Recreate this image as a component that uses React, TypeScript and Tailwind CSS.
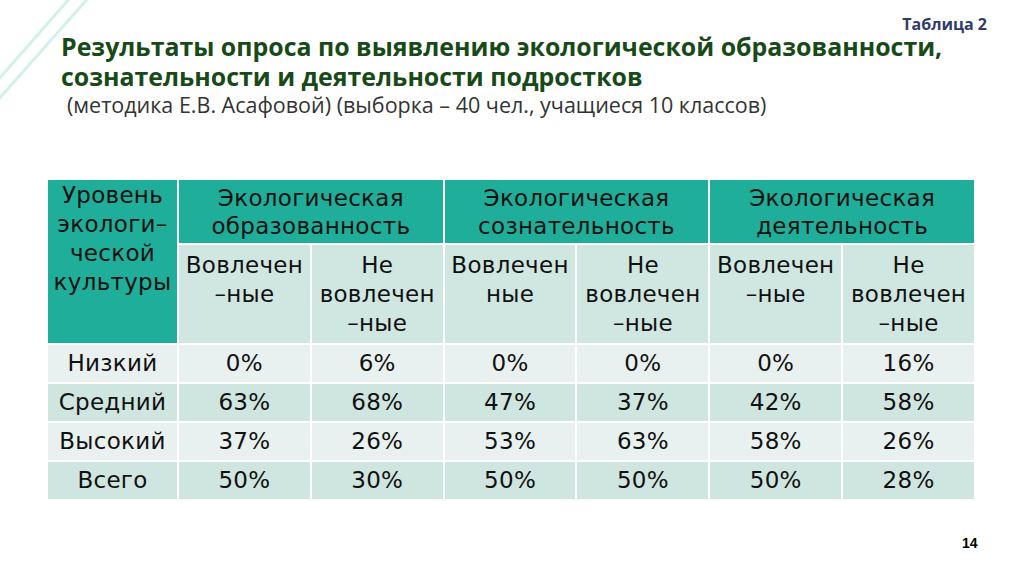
import React from "react";

const rows = [
  { name: "Низкий", vals: ["0%", "6%", "0%", "0%", "0%", "16%"], bg: "bg-[#e8f1ef]" },
  { name: "Средний", vals: ["63%", "68%", "47%", "37%", "42%", "58%"], bg: "bg-[#cfe5df]" },
  { name: "Высокий", vals: ["37%", "26%", "53%", "63%", "58%", "26%"], bg: "bg-[#e8f1ef]" },
  { name: "Всего", vals: ["50%", "30%", "50%", "50%", "50%", "28%"], bg: "bg-[#cfe5df]" },
];

const sub = [
  ["Вовлечен", "–ные"],
  ["Не", "вовлечен", "–ные"],
  ["Вовлечен", "ные"],
  ["Не", "вовлечен", "–ные"],
  ["Вовлечен", "–ные"],
  ["Не", "вовлечен", "–ные"],
];

export default function App() {
  return (
    <div className="relative w-[1024px] h-[574px] bg-white overflow-hidden" style={{ fontFamily: '"Open Sans", sans-serif' }}>
      <svg className="absolute left-0 top-0" width="120" height="120" viewBox="0 0 120 120">
        <line x1="-2" y1="80" x2="70" y2="-2" stroke="#d3f1eb" strokeWidth="3" />
        <line x1="-2" y1="100" x2="90" y2="-4" stroke="#d3f1eb" strokeWidth="3" />
      </svg>
      <div className="flex flex-col pt-[17px]">
        <div className="flex justify-end pr-[37px] text-[16px] font-bold leading-[14px] text-[#2f3b6e]">Таблица 2</div>
        <div className="pl-[61px] text-[24.9px] font-bold leading-[30px] text-[#174a17]">
          <div>Результаты опроса по выявлению экологической образованности,</div>
          <div>сознательности и деятельности подростков</div>
        </div>
        <div className="pl-[67px] text-[21.5px] leading-[26px] text-[#333] mt-[1px]">
          (методика Е.В. Асафовой) (выборка – 40 чел., учащиеся 10 классов)
        </div>
      </div>
      <div
        className="absolute left-[48px] top-[180px] w-[926px] grid grid-cols-[129px_repeat(6,1fr)] grid-rows-[63px_98px_37px_37px_37px_37px] gap-[2px] bg-white text-[#111] text-[23px] tracking-[0.3px]"
        style={{ fontFamily: '"DejaVu Sans", Verdana, sans-serif' }}
      >
        <div className="row-span-2 bg-[#1fae99] flex flex-col items-center pt-[1px] leading-[29px]">
          <span>Уровень</span>
          <span>экологи–</span>
          <span>ческой</span>
          <span>культуры</span>
        </div>
        {["образованность", "сознательность", "деятельность"].map((t) => (
          <div key={t} className="col-span-2 bg-[#1fae99] flex flex-col items-center justify-center leading-[28px]">
            <span>Экологическая</span>
            <span>{t}</span>
          </div>
        ))}
        {sub.map((lines, i) => (
          <div key={i} className="bg-[#d0e7e1] flex flex-col items-center pt-[6px] leading-[29px]">
            {lines.map((l, j) => (
              <span key={j}>{l}</span>
            ))}
          </div>
        ))}
        {rows.map((r) => (
          <React.Fragment key={r.name}>
            <div className={`${r.bg} flex items-center justify-center`}>{r.name}</div>
            {r.vals.map((v, i) => (
              <div key={i} className={`${r.bg} flex items-center justify-center`}>{v}</div>
            ))}
          </React.Fragment>
        ))}
      </div>
      <div className="absolute left-[962px] top-[534px] text-[14px] leading-[18px] font-bold text-black" style={{ fontFamily: '"Liberation Sans", sans-serif' }}>14</div>
    </div>
  );
}
